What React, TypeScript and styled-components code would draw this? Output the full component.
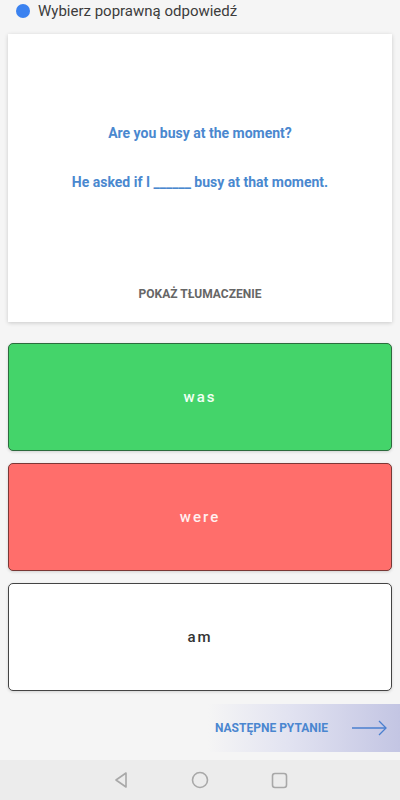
import React from 'react';
import styled, { createGlobalStyle } from 'styled-components';

const GlobalStyle = createGlobalStyle`
  html, body {
    margin: 0;
    padding: 0;
    background: #f5f5f5;
    font-family: Roboto, "Liberation Sans", Arial, sans-serif;
  }
  * {
    box-sizing: border-box;
  }
`;

const Screen = styled.div`
  width: 400px;
  height: 800px;
  display: flex;
  flex-direction: column;
  background: #f5f5f5;
  overflow: hidden;
`;

const Header = styled.div`
  height: 34px;
  display: flex;
  align-items: flex-start;
  padding: 4px 0 0 16px;
  gap: 8px;
`;

const Dot = styled.span`
  width: 14px;
  height: 14px;
  border-radius: 50%;
  background: #3b82f0;
  flex-shrink: 0;
`;

const HeaderText = styled.span`
  font-size: 15px;
  line-height: 14px;
  color: #3c3c3c;
`;

const Card = styled.div`
  margin: 0 8px;
  height: 288px;
  background: #fff;
  box-shadow: 0 1px 4px rgba(0, 0, 0, 0.18);
  display: flex;
  flex-direction: column;
  align-items: center;
  padding: 89px 0 18px;
`;

const Sentence = styled.div<{ $gap?: number }>`
  font-size: 14px;
  line-height: 20px;
  font-weight: 700;
  color: #4a88cf;
  margin-top: ${(p) => p.$gap ?? 0}px;
`;

const TranslateLink = styled.div`
  margin-top: auto;
  font-size: 12px;
  line-height: 20px;
  font-weight: 700;
  color: #666;
`;

const Options = styled.div`
  display: flex;
  flex-direction: column;
  gap: 12px;
  padding: 21px 8px 0;
`;

const Option = styled.div<{ $bg: string; $border: string; $color: string }>`
  height: 108px;
  border-radius: 5px;
  border: 1px solid ${(p) => p.$border};
  background: ${(p) => p.$bg};
  color: ${(p) => p.$color};
  box-shadow: 0 1px 3px rgba(0, 0, 0, 0.15);
  display: flex;
  align-items: center;
  justify-content: center;
  font-size: 15px;
  font-weight: 500;
  letter-spacing: 2px;
`;

const NextBar = styled.div`
  margin-top: 13px;
  height: 48px;
  display: flex;
  align-items: center;
  justify-content: flex-end;
  padding-right: 12px;
  gap: 24px;
  background: linear-gradient(90deg, rgba(197, 199, 228, 0) 52%, #e2e3f1 72%, #c3c5e3 100%);
`;

const NextText = styled.span`
  font-size: 12px;
  font-weight: 700;
  color: #4a86d0;
`;

const NavBar = styled.div`
  margin-top: auto;
  height: 40px;
  background: #ececec;
  display: flex;
  align-items: center;
  justify-content: center;
  gap: 62px;
`;

const options = [
  { label: 'was', bg: '#44d46a', border: '#2c6b3d', color: '#f2fff4' },
  { label: 'were', bg: '#ff6e6b', border: '#7a3836', color: '#fff0ef' },
  { label: 'am', bg: '#ffffff', border: '#444444', color: '#333333' },
];

const App: React.FC = () => {
  return (
    <Screen>
      <GlobalStyle />
      <Header>
        <Dot />
        <HeaderText>Wybierz poprawną odpowiedź</HeaderText>
      </Header>

      <Card>
        <Sentence>Are you busy at the moment?</Sentence>
        <Sentence $gap={29}>He asked if I ______ busy at that moment.</Sentence>
        <TranslateLink>POKAŻ TŁUMACZENIE</TranslateLink>
      </Card>

      <Options>
        {options.map((o) => (
          <Option key={o.label} $bg={o.bg} $border={o.border} $color={o.color}>
            {o.label}
          </Option>
        ))}
      </Options>

      <NextBar>
        <NextText>NASTĘPNE PYTANIE</NextText>
        <svg width="36" height="16" viewBox="0 0 36 16" fill="none" stroke="#4a7fcf" strokeWidth="1.3">
          <path d="M0 8 H34" />
          <path d="M27 1 L34 8 L27 15" />
        </svg>
      </NextBar>

      <NavBar>
        <svg width="16" height="18" viewBox="0 0 16 18" fill="none" stroke="#a8a8a8" strokeWidth="1.6">
          <path d="M13 2 L3 9 L13 16 Z" strokeLinejoin="round" />
        </svg>
        <svg width="18" height="18" viewBox="0 0 18 18" fill="none" stroke="#a8a8a8" strokeWidth="1.6">
          <circle cx="9" cy="9" r="7.5" />
        </svg>
        <svg width="17" height="17" viewBox="0 0 17 17" fill="none" stroke="#a8a8a8" strokeWidth="1.6">
          <rect x="1.5" y="1.5" width="14" height="14" rx="2.5" />
        </svg>
      </NavBar>
    </Screen>
  );
};

export default App;
